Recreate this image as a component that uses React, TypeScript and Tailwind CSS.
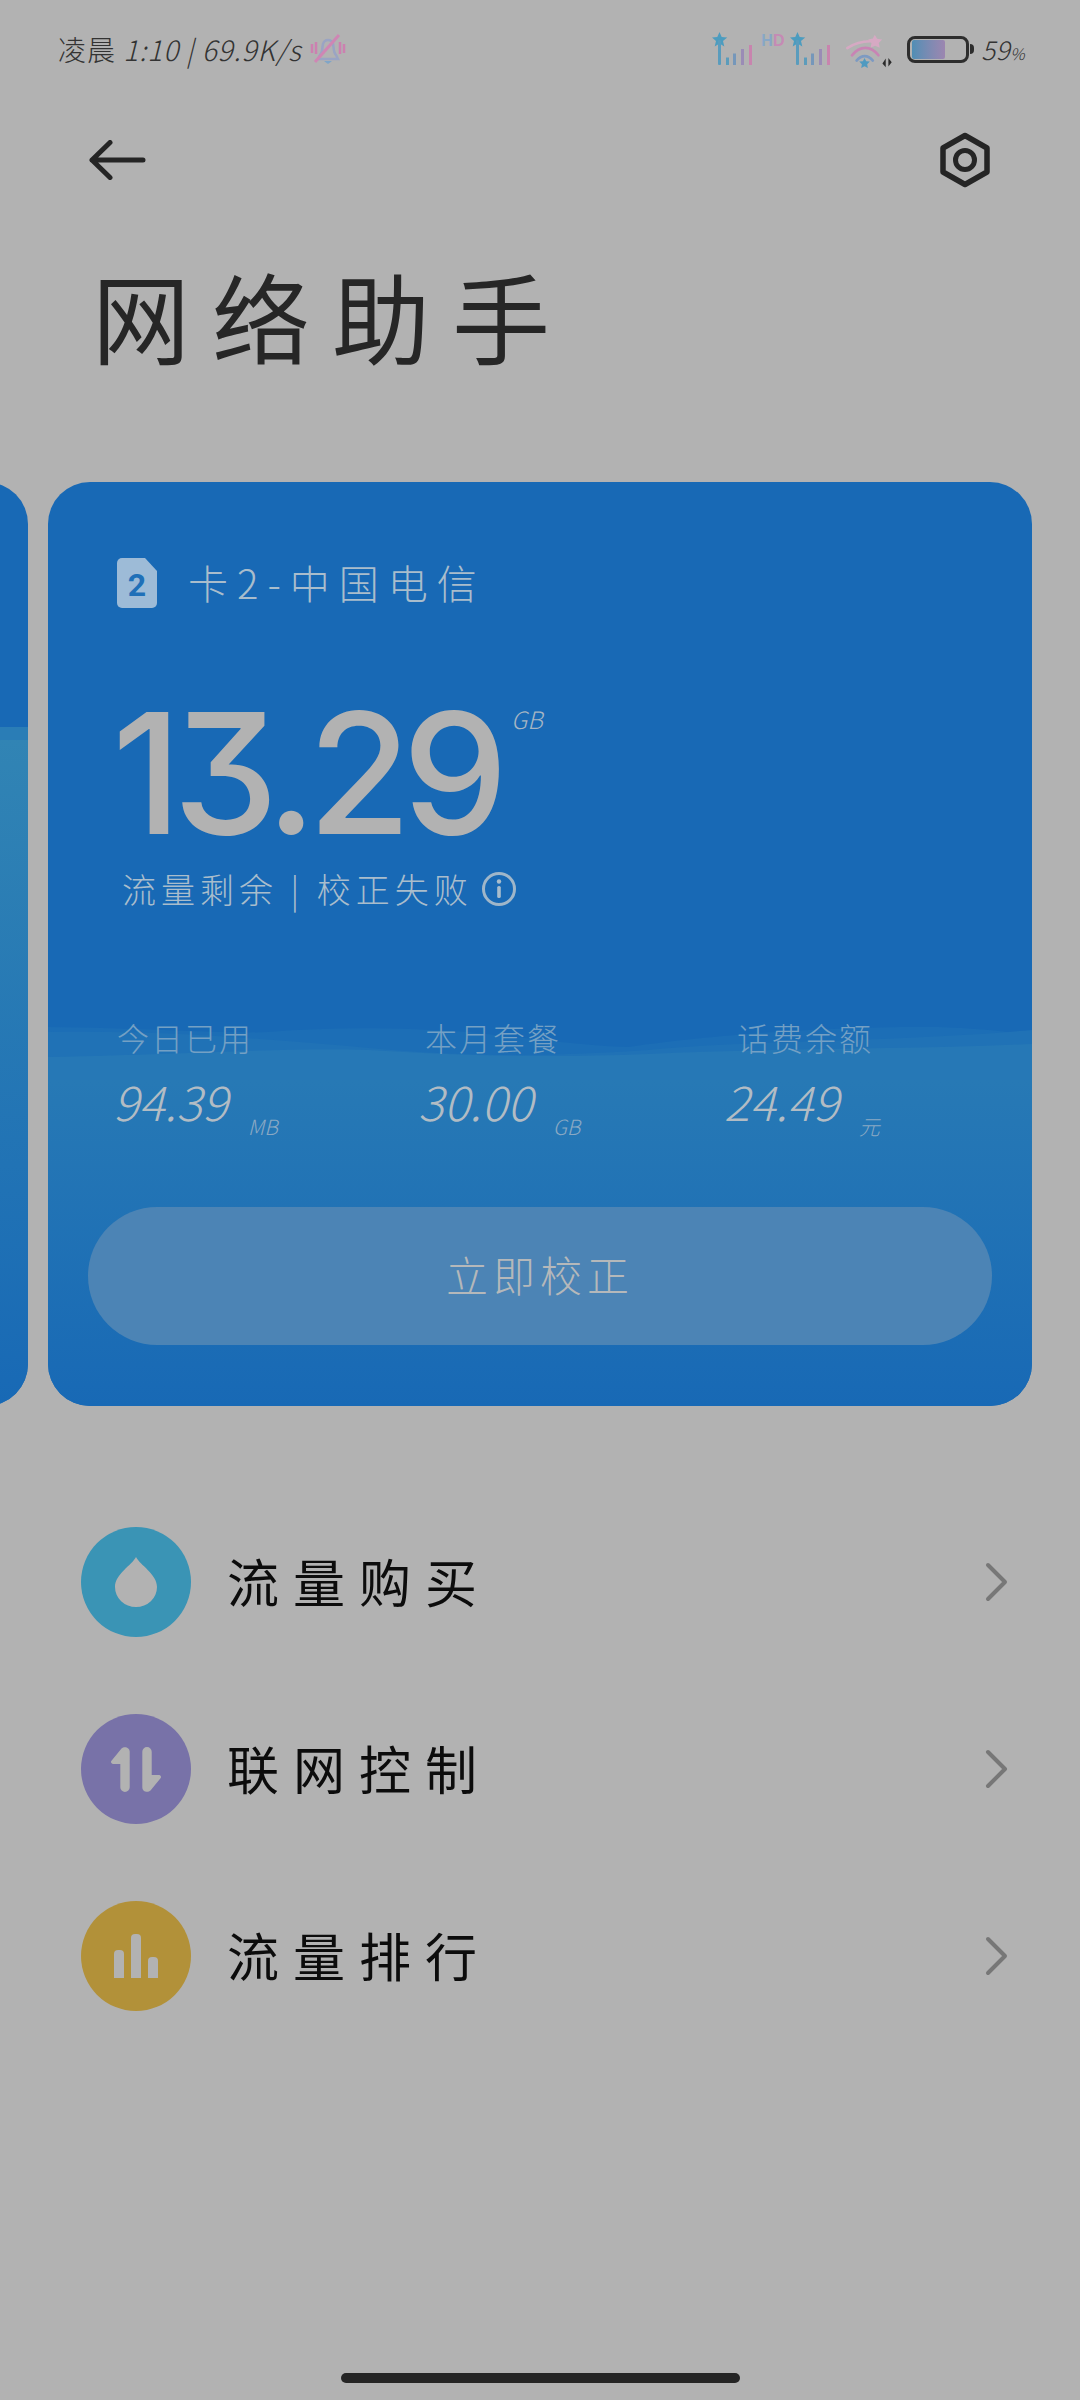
const stats = [
  { label: "今日已用", value: "94.39", unit: "MB", width: "w-[308px]", shift: "-ml-[4px]" },
  { label: "本月套餐", value: "30.00", unit: "GB", width: "w-[312px]", shift: "-ml-[7px]" },
  { label: "话费余额", value: "24.49", unit: "元", width: "w-[200px]", shift: "-ml-[13px]" },
];

function SignalIcon() {
  return (
    <svg width="41" height="34" viewBox="0 0 41 34">
      <path d="M7.5 0l2.2 5 5.5.5-4.2 3.6 1.3 5.4-4.8-2.9-4.8 2.9 1.3-5.4L0 5.5 5.3 5z" fill="#4c9cbf" />
      <rect x="6" y="8" width="3" height="25" rx="1" fill="#5a9cbd" />
      <rect x="14" y="25.5" width="3" height="7.5" fill="#5c9cbb" />
      <rect x="21" y="21.5" width="3" height="11.5" fill="#7597ba" />
      <rect x="29" y="17" width="3" height="16" fill="#9a8cb6" />
      <rect x="37" y="13" width="3" height="20" fill="#c884ae" />
    </svg>
  );
}

function WifiIcon() {
  return (
    <svg width="53" height="37" viewBox="610 100 160 111">
      <path d="M620 148c25-16 50-22 78-20" fill="none" stroke="#d6a9c3" strokeWidth="8" strokeLinecap="round" />
      <path d="M703 108l7 12 15 2-10 11 3 14-14-6-14 6 3-14-10-11 14-3z" fill="#d6a9c3" />
      <path d="M634 170c24-30 57-30 80 0" fill="none" stroke="#c884b4" strokeWidth="8" strokeLinecap="round" />
      <path d="M648 186c15-18 34-18 49 0" fill="none" stroke="#7d9ac2" strokeWidth="8" strokeLinecap="round" />
      <path d="M672 178l5 10 11 1-8 8 2 11-10-5-10 5 2-11-8-8 11-1z" fill="#4f9ac0" />
      <path d="M736 180v26l-10-11zM744 178v26l10-13z" fill="#2b2b2b" />
    </svg>
  );
}

function Battery() {
  return (
    <div className="flex items-center gap-[1px]">
      <div className="flex h-[27px] w-[62px] items-center rounded-[8px] border-[3px] border-[#2d2d2d] pl-[2px]">
        <div className="h-[19px] w-[33px] rounded-[2px] bg-gradient-to-r from-[#4f8eb5] to-[#9c86b0]" />
      </div>
      <div className="h-[10px] w-[4px] rounded-r-full bg-[#2d2d2d]" />
    </div>
  );
}

function StatusBar() {
  return (
    <div className="flex h-[34px] items-center justify-between pl-[58px] pr-[55px] text-[#333333]">
      <div className="flex items-center gap-[8px]">
        <span className="text-[28px] font-light leading-none tracking-[1px] whitespace-pre">
          凌晨 <span className="italic">1:10 | 69.9K/s</span>
        </span>
        <svg width="36" height="34" viewBox="0 0 36 34" fill="none">
          <path d="M10 23c3-3 2-8 3-11 1-3 3-4 5-4s4 1 5 4c1 3 0 8 3 11l2 4H8z" stroke="#9aa4c4" strokeWidth="2.5" />
          <path d="M14 29h8l-4 3z" fill="#7fa5c8" />
          <path d="M5 30L29 3" stroke="#cf86b4" strokeWidth="3" />
          <path d="M2 12v9M6 10v12M30 10v12M34 12v9" stroke="#cc80b0" strokeWidth="2.5" />
        </svg>
      </div>
      <div className="flex items-center">
        <SignalIcon />
        <span className="mb-[16px] ml-[8px] mr-[5px] w-[24px] font-['Liberation_Sans',sans-serif] text-[16px] font-bold leading-none">
          <span className="text-[#87a7c6]">H</span>
          <span className="text-[#c58ab5]">D</span>
        </span>
        <SignalIcon />
        <div className="ml-[13px] mr-[10px] mt-[3px]">
          <WifiIcon />
        </div>
        <Battery />
        <span className="ml-[7px] text-[26px] font-light italic leading-none tracking-[0.5px]">
          59<span className="text-[16px]">%</span>
        </span>
      </div>
    </div>
  );
}

function SimCard({ children }: { children: React.ReactNode }) {
  return (
    <div className="relative h-[924px] w-[984px] shrink-0 overflow-hidden rounded-[42px] bg-[#1869b5]">
      {children}
    </div>
  );
}

function Waves() {
  return (
    <>
      <svg className="absolute left-0 top-[538px]" width="984" height="62" viewBox="0 0 984 62">
        <path d="M0 7C100 8 180 14 220 12C290 6 360 8 420 12C480 18 540 26 580 27C640 18 760 6 890 7C930 8 960 12 984 15V62H0Z" fill="#1c6eb6" />
        <path d="M0 12C120 10 200 18 300 26C400 36 480 38 600 30C700 20 850 22 984 10V62H0Z" fill="#2072b6" />
        <path d="M0 37C150 34 220 28 320 30C420 36 500 38 600 34C720 28 850 30 984 24V62H0Z" fill="#2678b6" />
      </svg>
      <div className="absolute inset-x-0 bottom-0 top-[598px] bg-gradient-to-b from-[#2779b5] to-[#1869b5]" />
    </>
  );
}

function SimBadge() {
  return (
    <div className="relative h-[50px] w-[40px]">
      <svg width="40" height="50" viewBox="0 0 40 50">
        <path d="M5 0h23l12 13v32a5 5 0 0 1-5 5H5a5 5 0 0 1-5-5V5a5 5 0 0 1 5-5z" fill="#9dbbd7" />
      </svg>
      <span className="absolute inset-0 flex items-center justify-center pt-[4px] font-['Roboto',sans-serif] text-[32px] font-bold leading-none text-[#1f70b8]">2</span>
    </div>
  );
}

function MainCard() {
  return (
    <SimCard>
      <Waves />
      <div className="relative flex h-full flex-col pl-[69px]">
        <div className="mt-[76px] flex h-[50px] items-center">
          <SimBadge />
          <span className="mb-[3px] ml-[31px] text-[40px] font-light leading-none tracking-[9px] text-[#a9bdcc]">卡2-中国电信</span>
        </div>
        <div className="mt-[90px] flex items-start">
          <span className="-ml-[5px] font-['Inter',sans-serif] text-[168px] font-medium leading-[150px] tracking-[-9px] text-[#b2b2b2] [font-feature-settings:'cv09']">13.29</span>
          <span className="ml-[12px] mt-[9px] text-[24px] font-light italic leading-none text-[#a6b6c4]">GB</span>
        </div>
        <div className="ml-[5px] mt-[21px] flex items-center">
          <span className="text-[34px] font-light leading-[40px] tracking-[5px] text-[#a9bdcc]">流量剩余 | 校正失败</span>
          <svg className="ml-[8px]" width="36" height="36" viewBox="0 0 36 36" fill="none">
            <circle cx="18" cy="18" r="15.5" stroke="#9fb6c9" strokeWidth="3" />
            <circle cx="18" cy="10.5" r="2.2" fill="#a9bdcc" />
            <rect x="16.2" y="15" width="3.6" height="12" rx="1.6" fill="#a9bdcc" />
          </svg>
        </div>
        <div className="mt-[110px] flex">
          {stats.map((s) => (
            <div key={s.label} className={s.width}>
              <div className="text-[32px] font-light leading-[36px] tracking-[2px] text-[#74a0c4]">{s.label}</div>
              <div className={`${s.shift} mt-[19px] flex items-end`}>
                <span className="text-[48px] font-light italic leading-[52px] text-[#b2bcc4]">{s.value}</span>
                <span className="mb-[-12px] ml-[20px] text-[21px] font-light italic leading-[24px] text-[#8aa9c4]">{s.unit}</span>
              </div>
            </div>
          ))}
        </div>
      </div>
      <div className="absolute inset-x-[40px] bottom-[61px] flex h-[138px] items-center justify-center rounded-full bg-[#4c84b5]">
        <span className="mb-[4px] text-[42px] font-light leading-none tracking-[5px] text-[#b5b8ba]">立即校正</span>
      </div>
    </SimCard>
  );
}

function SideCard() {
  return (
    <SimCard>
      <div className="absolute inset-x-0 top-[245px] h-[14px] bg-[#2a7db6]" />
      <div className="absolute inset-x-0 bottom-0 top-[258px] bg-gradient-to-b from-[#3184b4] to-[#1869b5]" />
    </SimCard>
  );
}

function DropIcon() {
  return (
    <svg width="42" height="50" viewBox="0 0 42 50">
      <path d="M21 0C17 8 0 17 0 30a21 20 0 0 0 42 0C42 17 25 8 21 0z" fill="#b2b2b2" />
    </svg>
  );
}

const arrowPath =
  "M18.7 4.7V40.3a4.7 4.7 0 0 1-9.4 0V17H2a2 2 0 0 1-1.5-3.3L10.5 1.5C13-1 18.7 0 18.7 4.7z";

function UpDownIcon() {
  return (
    <svg width="50" height="45" viewBox="0 0 50 45" fill="#b2b2b2">
      <path d={arrowPath} />
      <path d={arrowPath} transform="rotate(180 25 22.5)" />
    </svg>
  );
}

function BarsIcon() {
  return (
    <div className="flex items-end gap-[7px]">
      <div className="h-[28px] w-[10px] rounded-t-[4px] bg-[#b2b2b2]" />
      <div className="h-[44px] w-[10px] rounded-t-[4px] bg-[#b2b2b2]" />
      <div className="h-[21px] w-[10px] rounded-t-[4px] bg-[#b2b2b2]" />
    </div>
  );
}

const menu = [
  { title: "流量购买", color: "bg-[#3a94b5]", icon: <DropIcon /> },
  { title: "联网控制", color: "bg-[#7872a8]", icon: <UpDownIcon /> },
  { title: "流量排行", color: "bg-[#b29139]", icon: <BarsIcon /> },
];

export default function App() {
  return (
    <div className="flex h-[2400px] w-[1080px] flex-col overflow-hidden bg-[#b2b2b2] font-['Noto_Sans_CJK_SC','Noto_Sans',sans-serif]">
      <div className="pt-[32px]">
        <StatusBar />
      </div>

      <div className="mt-[63px] flex h-[62px] items-center justify-between pl-[89px] pr-[89px]">
        <svg width="57" height="40" viewBox="0 0 57 40" fill="none" stroke="#252525" strokeWidth="5" strokeLinecap="round" strokeLinejoin="round">
          <path d="M54 20H3M21 2.5L3 20l18 17.5" />
        </svg>
        <svg width="52" height="56" viewBox="0 0 52 56" fill="none" stroke="#252525">
          <path d="M26 3.5l22 12.5v24L26 52.5 4 40V16z" strokeWidth="5.5" strokeLinejoin="round" />
          <circle cx="26" cy="28" r="9.5" strokeWidth="5" />
        </svg>
      </div>

      <h1 className="ml-[92px] mt-[68px] text-[98px] font-normal leading-[110px] tracking-[22px] text-[#262626]">网络助手</h1>

      <div className="mt-[113px] flex gap-[20px]">
        <div className="-ml-[956px]">
          <SideCard />
        </div>
        <MainCard />
      </div>

      <div className="mt-[121px] flex flex-col gap-[77px] pl-[81px] pr-[49px]">
        {menu.map((m) => (
          <div key={m.title} className="flex h-[110px] items-center">
            <div className={`flex h-[110px] w-[110px] items-center justify-center rounded-full ${m.color}`}>{m.icon}</div>
            <span className="mb-[3px] ml-[36px] flex-1 text-[52px] leading-none tracking-[14px] text-[#0c0c0c]">{m.title}</span>
            <svg width="70" height="70" viewBox="0 0 70 70" fill="none" stroke="#777777" strokeWidth="4" strokeLinecap="round" strokeLinejoin="round">
              <path d="M27 18l17 17-17 17" />
            </svg>
          </div>
        ))}
      </div>

      <div className="mt-auto pb-[17px]">
        <div className="mx-auto h-[10px] w-[399px] rounded-full bg-[#252525]" />
      </div>
    </div>
  );
}
